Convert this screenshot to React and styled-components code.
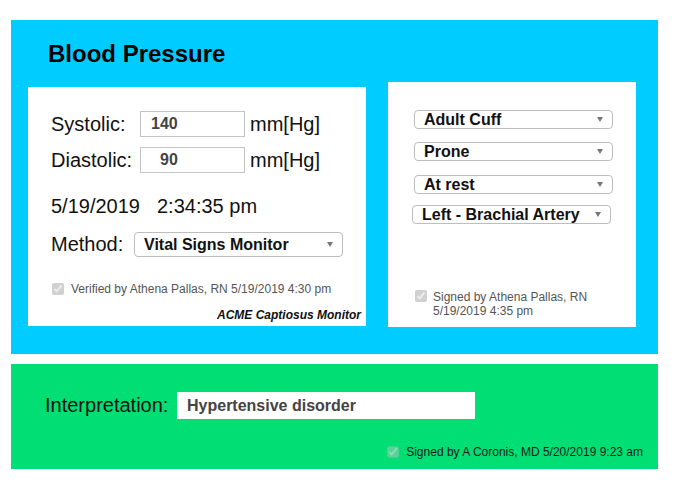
import React from "react";
import styled, { createGlobalStyle } from "styled-components";

const GlobalStyle = createGlobalStyle`
  body {
    margin: 0;
    background: #fff;
    font-family: "Liberation Sans", Arial, sans-serif;
    color: #111;
  }
`;

const Page = styled.div`
  display: flex;
  flex-direction: column;
  gap: 10px;
  width: 647px;
  padding: 20px 0 0 11px;
`;

const BluePanel = styled.section`
  background: #00ccff;
  padding: 20px 22px 27px 17px;
`;

const Title = styled.h1`
  margin: 0 0 14px 20px;
  font-size: 24px;
  font-weight: bold;
  color: #000;
`;

const CardRow = styled.div`
  display: flex;
  align-items: flex-start;
  gap: 22px;
`;

const Card = styled.div`
  display: flex;
  flex-direction: column;
  background: #fff;
  box-sizing: border-box;
  width: ${(p) => p.$width}px;
  height: ${(p) => p.$height}px;
  margin-top: ${(p) => p.$offset || 0}px;
  padding: ${(p) => p.$padding};
`;

const Row = styled.div`
  display: flex;
  align-items: center;
  margin-top: ${(p) => p.$gap || 0}px;
`;

const Label = styled.span`
  flex: none;
  font-size: 20px;
  color: #111;
  width: ${(p) => (p.$width ? `${p.$width}px` : "auto")};
`;

const ValueBox = styled.div`
  box-sizing: border-box;
  width: 105px;
  height: 26px;
  border: 1px solid #c4c4c4;
  display: flex;
  align-items: center;
  padding-left: ${(p) => p.$indent}px;
  font-size: 16px;
  font-weight: bold;
  color: #444;
`;

const Unit = styled.span`
  font-size: 20px;
  margin-left: 5px;
  color: #111;
`;

const DateLine = styled.div`
  font-size: 20px;
  margin-top: 22px;
  color: #111;
  display: flex;
  gap: 17px;
`;

const Select = styled.div`
  box-sizing: border-box;
  flex: none;
  display: flex;
  align-items: center;
  justify-content: space-between;
  width: ${(p) => p.$width}px;
  height: ${(p) => p.$height}px;
  border: 1px solid #bdbdbd;
  border-radius: 4px;
  padding: 0 9px 0 ${(p) => p.$pad || 9}px;
  margin-left: ${(p) => p.$shift || 0}px;
  margin-top: ${(p) => p.$gap || 0}px;
  font-size: 16px;
  font-weight: bold;
  color: #111;
  background: #fff;
`;

const Arrow = styled.span`
  width: 0;
  height: 0;
  border-left: 3px solid transparent;
  border-right: 3px solid transparent;
  border-top: 5px solid #777;
`;

const Check = styled.input`
  width: 12px;
  height: 12px;
  margin: 0 ${(p) => p.$space || 7}px 0 0;
  flex: none;
  opacity: ${(p) => p.$faded || 1};
`;

const SignRow = styled.label`
  display: flex;
  align-items: ${(p) => (p.$top ? "flex-start" : "center")};
  font-size: 12px;
  line-height: 14px;
  color: ${(p) => p.$color || "#555"};
  margin-top: ${(p) => (p.$auto ? "auto" : `${p.$gap || 0}px`)};
  margin-left: ${(p) => p.$indent || 0}px;
  align-self: ${(p) => (p.$end ? "flex-end" : "flex-start")};
`;

const Brand = styled.div`
  margin-top: auto;
  align-self: flex-end;
  font-size: 12px;
  font-weight: bold;
  font-style: italic;
  color: #111;
`;

const GreenPanel = styled.section`
  background: #00de74;
  display: flex;
  flex-direction: column;
  padding: 28px 15px 10px 34px;
`;

const InterpretationBox = styled.div`
  box-sizing: border-box;
  width: 298px;
  height: 27px;
  background: #fff;
  display: flex;
  align-items: center;
  padding-left: 10px;
  font-size: 16px;
  font-weight: bold;
  color: #444;
`;

export default function App() {
  return (
    <>
      <GlobalStyle />
      <Page>
        <BluePanel>
          <Title>Blood Pressure</Title>
          <CardRow>
            <Card $width={338} $height={239} $offset={5} $padding="24px 5px 4px 23px">
              <Row>
                <Label $width={89}>Systolic:</Label>
                <ValueBox $indent={10}>140</ValueBox>
                <Unit>mm[Hg]</Unit>
              </Row>
              <Row $gap={10}>
                <Label $width={89}>Diastolic:</Label>
                <ValueBox $indent={19}>90</ValueBox>
                <Unit>mm[Hg]</Unit>
              </Row>
              <DateLine>
                <span>5/19/2019</span>
                <span>2:34:35 pm</span>
              </DateLine>
              <Row $gap={14}>
                <Label $width={83}>Method:</Label>
                <Select $width={209} $height={25}>
                  Vital Signs Monitor
                  <Arrow />
                </Select>
              </Row>
              <SignRow $gap={25} $indent={1}>
                <Check type="checkbox" checked disabled readOnly />
                Verified by Athena Pallas, RN 5/19/2019 4:30 pm
              </SignRow>
              <Brand>ACME Captiosus Monitor</Brand>
            </Card>
            <Card $width={248} $height={245} $padding="28px 0 9px 26px">
              <Select $width={199} $height={19}>
                Adult Cuff
                <Arrow />
              </Select>
              <Select $width={199} $height={19} $gap={13}>
                Prone
                <Arrow />
              </Select>
              <Select $width={199} $height={19} $gap={14}>
                At rest
                <Arrow />
              </Select>
              <Select $width={199} $height={19} $gap={11} $shift={-2}>
                Left - Brachial Artery
                <Arrow />
              </Select>
              <SignRow $auto $top $indent={1}>
                <Check type="checkbox" checked disabled readOnly $space={6} />
                <span>
                  Signed by Athena Pallas, RN
                  <br />
                  5/19/2019 4:35 pm
                </span>
              </SignRow>
            </Card>
          </CardRow>
        </BluePanel>
        <GreenPanel>
          <Row>
            <Label $width={132}>Interpretation:</Label>
            <InterpretationBox>Hypertensive disorder</InterpretationBox>
          </Row>
          <SignRow $gap={26} $end $color="#1a1a1a">
            <Check type="checkbox" checked disabled readOnly $faded={0.6} />
            Signed by A Coronis, MD 5/20/2019 9:23 am
          </SignRow>
        </GreenPanel>
      </Page>
    </>
  );
}
